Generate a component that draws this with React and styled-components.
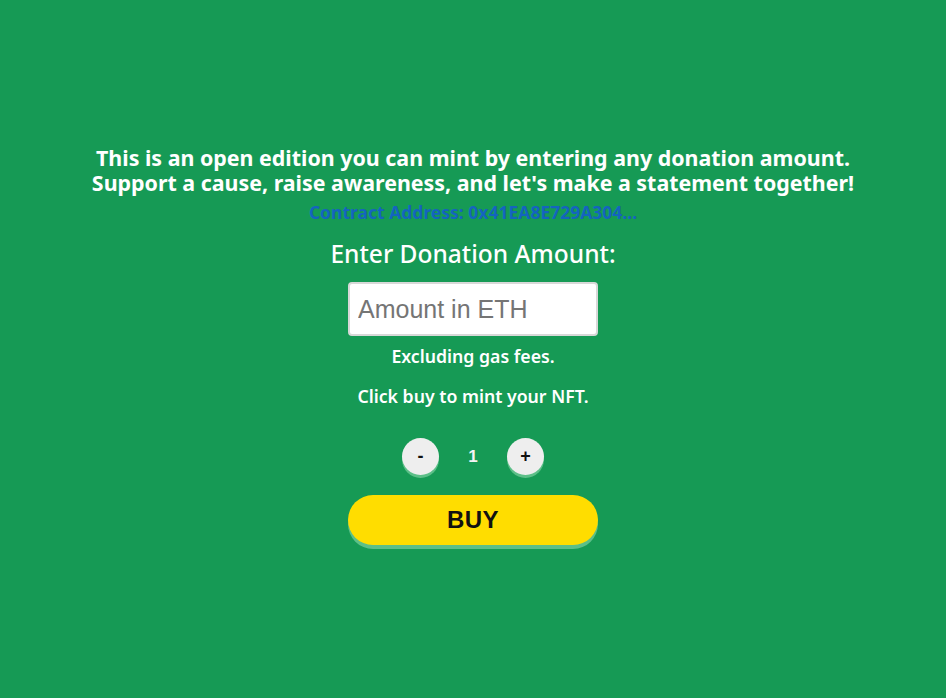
import React, { useState } from "react";
import styled, { createGlobalStyle } from "styled-components";

const GlobalStyle = createGlobalStyle`
  html, body {
    margin: 0;
    padding: 0;
    background: #169a55;
  }
  body {
    font-family: "Noto Sans", "Open Sans", sans-serif;
  }
`;

const Page = styled.div`
  min-height: 698px;
  display: flex;
  flex-direction: column;
  align-items: center;
  padding-top: 145px;
  box-sizing: border-box;
  color: #fff;
  text-align: center;
`;

const Intro = styled.h2`
  margin: 0;
  font-size: 21.4px;
  font-weight: 700;
  display: flex;
  flex-direction: column;
`;

const IntroLine = styled.span`
  display: block;
  height: 25px;
  line-height: 25px;
  overflow: visible;
`;

const Address = styled.a`
  margin-top: 6px;
  font-size: 17.5px;
  font-weight: 700;
  line-height: 22px;
  color: #1464bf;
  text-decoration: none;
`;

const Label = styled.h3`
  margin: 15px 0 0;
  font-size: 24.5px;
  font-weight: 500;
  line-height: 32px;
`;

const AmountInput = styled.input`
  margin-top: 12px;
  width: 250px;
  height: 54px;
  box-sizing: border-box;
  border: 2px solid #d8d8d8;
  border-radius: 4px;
  padding: 0 8px;
  font-family: "Liberation Sans", Arial, sans-serif;
  font-size: 25px;
  color: #333;
  outline: none;

  &::placeholder {
    color: #757575;
  }
`;

const Note = styled.p`
  margin: ${(p) => p.$top}px 0 0;
  font-size: 17.7px;
  font-weight: 600;
  line-height: 24px;
`;

const Counter = styled.div`
  margin-top: 30px;
  display: flex;
  align-items: center;
`;

const RoundButton = styled.button`
  width: 37px;
  height: 37px;
  border-radius: 50%;
  border: none;
  background: #eeeeee;
  box-shadow: 0 3px 0 #5cbf88;
  font-family: "Liberation Sans", Arial, sans-serif;
  font-size: 18px;
  font-weight: 700;
  color: #111;
  padding: 0;
  cursor: pointer;
`;

const Count = styled.span`
  width: 68px;
  font-family: "Liberation Sans", Arial, sans-serif;
  font-size: 17px;
  font-weight: 700;
  color: #f4f4f4;
`;

const BuyButton = styled.button`
  margin-top: 20px;
  width: 250px;
  height: 50px;
  border: none;
  border-radius: 25px;
  background: #ffdd00;
  box-shadow: 0 4px 0 #5cbf88;
  font-family: "Liberation Sans", Arial, sans-serif;
  font-size: 24px;
  font-weight: 700;
  color: #111;
  letter-spacing: 0.5px;
  cursor: pointer;
`;

export default function App() {
  const [count, setCount] = useState(1);

  return (
    <>
      <GlobalStyle />
      <Page>
        <Intro>
          <IntroLine>This is an open edition you can mint by entering any donation amount.</IntroLine>
          <IntroLine>Support a cause, raise awareness, and let's make a statement together!</IntroLine>
        </Intro>
        <Address href="#">Contract Address: 0x41EA8E729A304...</Address>
        <Label>Enter Donation Amount:</Label>
        <AmountInput type="text" placeholder="Amount in ETH" />
        <Note $top={8}>Excluding gas fees.</Note>
        <Note $top={16}>Click buy to mint your NFT.</Note>
        <Counter>
          <RoundButton onClick={() => setCount((c) => Math.max(1, c - 1))}>-</RoundButton>
          <Count>{count}</Count>
          <RoundButton onClick={() => setCount((c) => c + 1)}>+</RoundButton>
        </Counter>
        <BuyButton>BUY</BuyButton>
      </Page>
    </>
  );
}
